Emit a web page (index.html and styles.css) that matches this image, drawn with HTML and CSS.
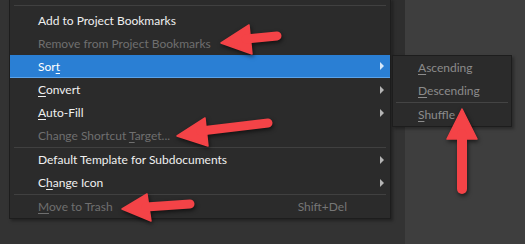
FILE: index.html
```html
<!DOCTYPE html>
<html>
<head>
<meta charset="utf-8">
<link rel="stylesheet" href="styles.css">
</head>
<body>
<div class="stage">
  <div class="left-area"></div>
  <div class="gutter"><div class="gutter-top"></div></div>
  <div class="right-panel"></div>

  <div class="menu">
    <div class="sep top-sep"></div>
    <div class="item"><span class="label">Add to Project Bookmarks</span></div>
    <div class="item disabled"><span class="label">Remove from Project Bookmarks</span></div>
    <div class="item active"><span class="label">Sor<u>t</u></span><span class="tri"></span></div>
    <div class="item"><span class="label"><u>C</u>onvert</span><span class="tri"></span></div>
    <div class="item"><span class="label"><u>A</u>uto-Fill</span><span class="tri"></span></div>
    <div class="item disabled"><span class="label">Change Shortcut <u>T</u>arget...</span></div>
    <div class="sep"></div>
    <div class="item"><span class="label">Default Template for Subdocuments</span><span class="tri"></span></div>
    <div class="item"><span class="label">C<u>h</u>ange Icon</span><span class="tri"></span></div>
    <div class="sep"></div>
    <div class="item disabled"><span class="label"><u>M</u>ove to Trash</span><span class="shortcut">Shift+Del</span></div>
  </div>

  <div class="submenu">
    <div class="sitem"><u>A</u>scending</div>
    <div class="sitem"><u>D</u>escending</div>
    <div class="ssep"></div>
    <div class="sitem"><u>S</u>huffle</div>
  </div>

  <svg class="arrows" width="525" height="244" viewBox="0 0 525 244">
    <g class="red">
      <polygon points="221,43 249,25 252,54"/>
      <line x1="246" y1="39" x2="277" y2="36"/>
      <polygon points="177,136 205,118 208,146"/>
      <line x1="201" y1="131" x2="268" y2="123"/>
      <polygon points="122,209 147,194 151,221"/>
      <line x1="146" y1="207" x2="190" y2="204"/>
      <polygon points="462,109 447,139 477,139"/>
      <line class="vshaft" x1="462" y1="134" x2="462" y2="189"/>
    </g>
  </svg>
</div>
</body>
</html>
```
FILE: styles.css
```css
html, body {
  margin: 0;
  padding: 0;
  background: #333333;
  overflow: hidden;
}
.stage {
  position: relative;
  width: 525px;
  height: 244px;
  display: flex;
  font-family: Lato, "Open Sans", sans-serif;
  font-size: 12px;
}
.left-area {
  width: 392px;
  background: #333333;
}
.gutter {
  width: 13px;
  background: #333333;
}
.gutter-top {
  height: 55px;
  background: #2e2e2e;
}
.right-panel {
  flex: 1;
  background: #3e3e3e;
}
.menu {
  position: absolute;
  left: 9px;
  top: -2px;
  width: 380px;
  background: #2b2b2b;
  border: 1px solid #1d1d1d;
  box-shadow: 2px 2px 3px rgba(0,0,0,0.35);
}
.sep {
  height: 1px;
  background: #404040;
  margin: 0 4px;
}
.top-sep {
  margin-top: 6px;
  margin-bottom: 3px;
}
.item {
  height: 23px;
  display: flex;
  align-items: center;
  color: #f0f0f0;
  position: relative;
  box-sizing: border-box;
}
.item .label {
  padding-left: 28px;
  flex: 1;
  white-space: nowrap;
}
.item.disabled {
  color: #6f6f6f;
}
.item.active {
  background: #2a7fd4;
  border-bottom: 1px solid #5ba3ea;
  color: #ffffff;
}
.tri {
  width: 0;
  height: 0;
  border-top: 4px solid transparent;
  border-bottom: 4px solid transparent;
  border-left: 4px solid #b5b5b5;
  margin-right: 6px;
}
.item.active .tri {
  border-left-color: #d6e8fa;
}
.shortcut {
  color: #767676;
  margin-right: 43px;
}
u {
  text-decoration: underline;
  text-underline-offset: 2px;
}
.submenu {
  position: absolute;
  left: 392px;
  top: 55px;
  width: 118px;
  background: #2b2b2b;
  border: 1px solid #1d1d1d;
  box-shadow: 2px 2px 3px rgba(0,0,0,0.35);
}
.sitem {
  height: 23px;
  line-height: 23px;
  padding-left: 25px;
  color: #8c8c8c;
  white-space: nowrap;
}
.ssep {
  height: 1px;
  background: #444444;
  margin: 0 3px;
}
.arrows {
  position: absolute;
  left: 0;
  top: 0;
}
.red {
  fill: #f44347;
  stroke: #f44347;
  filter: drop-shadow(1px 2px 2px rgba(0,0,0,0.6));
}
.red polygon {
  stroke-width: 1.5;
  stroke-linejoin: round;
}
.red line {
  stroke-width: 9;
  stroke-linecap: round;
}
.red .vshaft {
  stroke-width: 10;
}
```
